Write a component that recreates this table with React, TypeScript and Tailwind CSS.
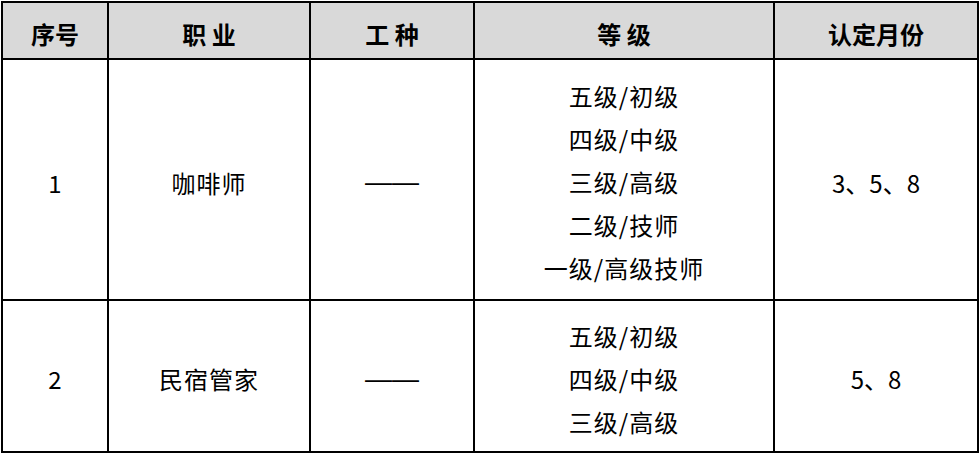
const rows = [
  {
    no: '1',
    job: '咖啡师',
    levels: ['五级/初级', '四级/中级', '三级/高级', '二级/技师', '一级/高级技师'],
    months: '3、5、8',
    h: 'h-[241px]',
  },
  {
    no: '2',
    job: '民宿管家',
    levels: ['五级/初级', '四级/中级', '三级/高级'],
    months: '5、8',
    h: 'h-[152px]',
  },
];

const heads = ['序号', '职 业', '工 种', '等 级', '认定月份'];

export default function App() {
  return (
    <div className="bg-white w-[979px] h-[454px] pl-px pt-px font-['Microsoft_YaHei','Noto_Sans_CJK_SC',sans-serif] text-black overflow-hidden">
      <table className="w-[976px] table-fixed border-collapse border-2 border-black text-[24px]">
        <colgroup>
          <col className="w-[106px]" />
          <col className="w-[202px]" />
          <col className="w-[164px]" />
          <col className="w-[300px]" />
          <col className="w-[204px]" />
        </colgroup>
        <thead>
          <tr className="h-[57px] bg-[#d9d9d9]">
            {heads.map((h) => (
              <th key={h} className="border-2 border-black font-bold text-center whitespace-pre p-0 pt-[6px] leading-none">
                {h}
              </th>
            ))}
          </tr>
        </thead>
        <tbody>
          {rows.map((r) => (
            <tr key={r.no} className={r.h}>
              <td className="border-2 border-black text-center p-0 pt-[6px]">{r.no}</td>
              <td className="border-2 border-black text-center p-0 pt-[6px] tracking-[1px]">{r.job}</td>
              <td className="border-2 border-black text-center p-0 pt-[6px]">
                <span className="font-['Liberation_Sans',sans-serif] text-[27px]">——</span>
              </td>
              <td className="border-2 border-black text-center p-0 pt-[4px] tracking-[1px]">
                {r.levels.map((l) => (
                  <div key={l} className="leading-[43px]">
                    {l}
                  </div>
                ))}
              </td>
              <td className="border-2 border-black text-center p-0 pt-[6px]">{r.months}</td>
            </tr>
          ))}
        </tbody>
      </table>
    </div>
  );
}
